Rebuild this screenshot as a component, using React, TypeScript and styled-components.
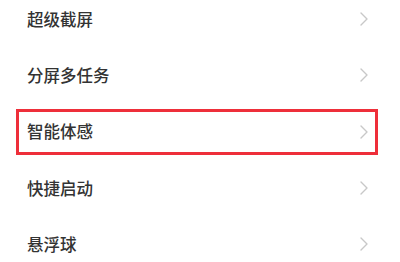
import React from "react";
import styled, { createGlobalStyle } from "styled-components";

const Global = createGlobalStyle`
  html, body { margin: 0; padding: 0; background: #ffffff; }
  body { width: 400px; height: 262px; overflow: hidden; }
`;

const List = styled.div`
  display: flex;
  flex-direction: column;
  margin-top: -9px;
  width: 400px;
  background: #ffffff;
`;

const Row = styled.div`
  position: relative;
  height: 56.3px;
  display: flex;
  align-items: center;
  justify-content: space-between;
  padding: 0 32px 0 27px;
  box-sizing: border-box;
`;

const Label = styled.span`
  font-family: "Noto Sans CJK SC", "Noto Sans", sans-serif;
  font-size: 16.5px;
  font-weight: 500;
  color: #333333;
  line-height: 1;
`;

const Highlight = styled.div`
  position: absolute;
  left: 16px;
  right: 22px;
  top: 5px;
  bottom: 5px;
  border: 3px solid #ee2f3a;
  pointer-events: none;
`;

const Chevron = () => (
  <svg width="8" height="14" viewBox="0 0 8 14" fill="none">
    <polyline points="1,1 7,7 1,13" stroke="#c8c8c8" strokeWidth="1.4" strokeLinecap="round" strokeLinejoin="round" />
  </svg>
);

const items = [
  { label: "超级截屏" },
  { label: "分屏多任务" },
  { label: "智能体感", highlighted: true },
  { label: "快捷启动" },
  { label: "悬浮球" },
];

export default function App() {
  return (
    <>
      <Global />
      <List>
        {items.map((it) => (
          <Row key={it.label}>
            <Label>{it.label}</Label>
            <Chevron />
            {it.highlighted && <Highlight />}
          </Row>
        ))}
      </List>
    </>
  );
}
